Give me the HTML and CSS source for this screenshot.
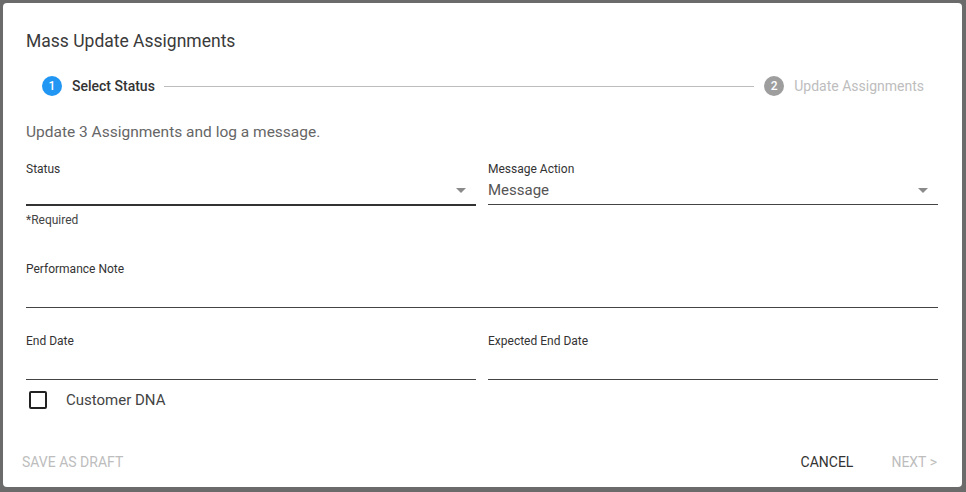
FILE: index.html
```html
<!DOCTYPE html>
<html>
<head>
<meta charset="utf-8">
<link rel="stylesheet" href="styles.css">
</head>
<body>
<div class="dialog">
  <h1 class="title">Mass Update Assignments</h1>
  <div class="stepper">
    <div class="step active"><span class="circle">1</span><span class="step-label">Select Status</span></div>
    <div class="connector"></div>
    <div class="step"><span class="circle">2</span><span class="step-label">Update Assignments</span></div>
  </div>
  <p class="subtitle">Update 3 Assignments and log a message.</p>
  <div class="row row-first">
    <div class="field">
      <label class="label">Status</label>
      <div class="input select focused"><span class="value"></span><span class="arrow"></span></div>
      <div class="helper">*Required</div>
    </div>
    <div class="field">
      <label class="label">Message Action</label>
      <div class="input select"><span class="value">Message</span><span class="arrow"></span></div>
    </div>
  </div>
  <div class="field full perf">
    <label class="label">Performance Note</label>
    <div class="input tall"></div>
  </div>
  <div class="row row-dates">
    <div class="field">
      <label class="label">End Date</label>
      <div class="input tall"></div>
    </div>
    <div class="field">
      <label class="label">Expected End Date</label>
      <div class="input tall"></div>
    </div>
  </div>
  <div class="check-row">
    <span class="checkbox"></span>
    <span class="check-label">Customer DNA</span>
  </div>
  <div class="actions">
    <button class="btn disabled draft">SAVE AS DRAFT</button>
    <div class="right-actions">
      <button class="btn">CANCEL</button>
      <button class="btn disabled">NEXT &gt;</button>
    </div>
  </div>
</div>
</body>
</html>
```
FILE: styles.css
```css
* { box-sizing: border-box; }
html, body { margin: 0; padding: 0; }
body {
  background: #6b6b6b;
  font-family: Roboto, "Liberation Sans", sans-serif;
  width: 966px;
  height: 492px;
  overflow: hidden;
  padding: 3px;
}
.dialog {
  width: 959px;
  height: 484px;
  background: #fff;
  border-radius: 4px;
  padding: 26px 24px 15px 23px;
  display: flex;
  flex-direction: column;
}
.title {
  margin: 0;
  font-size: 17.5px;
  line-height: 24px;
  font-weight: 400;
  color: #3a3a3a;
}
.stepper {
  margin-top: 21px;
  height: 24px;
  display: flex;
  align-items: center;
  padding: 0 14px 0 16px;
}
.step { display: flex; align-items: center; gap: 10px; }
.circle {
  width: 20px; height: 20px; border-radius: 50%;
  background: #9e9e9e; color: #fff;
  font-size: 12px; font-weight: 500;
  display: flex; align-items: center; justify-content: center;
}
.step.active .circle { background: #2196f3; }
.step-label { font-size: 14px; color: #bdbdbd; }
.step.active .step-label { color: #333; font-weight: 500; }
.connector { flex: 1; height: 1px; background: #bdbdbd; margin: 0 10px 0 9px; }
.subtitle {
  margin: 24px 0 0;
  font-size: 15.5px;
  line-height: 20px;
  color: #666;
}
.row {
  display: grid;
  grid-template-columns: 1fr 1fr;
  column-gap: 12px;
}
.row-first { margin-top: 20px; align-items: start; }
.label {
  display: block;
  font-size: 12px;
  line-height: 14px;
  color: #333;
}
.input {
  position: relative;
  height: 29px;
  border-bottom: 1px solid #444;
  display: flex;
  align-items: center;
}
.input.focused { height: 30px; border-bottom: 2px solid #333; }
.value { font-size: 15px; color: #555; }
.arrow {
  position: absolute;
  right: 10px;
  top: 12px;
  width: 0; height: 0;
  border-left: 5px solid transparent;
  border-right: 5px solid transparent;
  border-top: 5px solid #8a8a8a;
}
.helper {
  margin-top: 7px;
  font-size: 12px;
  line-height: 14px;
  color: #444;
}
.perf { margin-top: 35px; }
.input.tall { height: 32px; }
.row-dates { margin-top: 26px; }
.check-row {
  margin-top: 10px;
  display: flex;
  align-items: center;
  height: 20px;
  padding-left: 3px;
}
.checkbox {
  width: 18px; height: 18px;
  border: 2px solid #222;
  border-radius: 2px;
}
.check-label { margin-left: 19px; font-size: 15px; color: #444; }
.actions {
  margin-top: auto;
  display: flex;
  justify-content: space-between;
  align-items: center;
  height: 20px;
}
.right-actions { display: flex; gap: 38px; margin-right: 1px; }
.btn {
  background: none; border: 0; padding: 0;
  font-family: inherit;
  font-size: 14px;
  line-height: 20px;
  color: #333;
}
.btn.disabled { color: #bdbdbd; }
.draft { margin-left: -4px; }
```
